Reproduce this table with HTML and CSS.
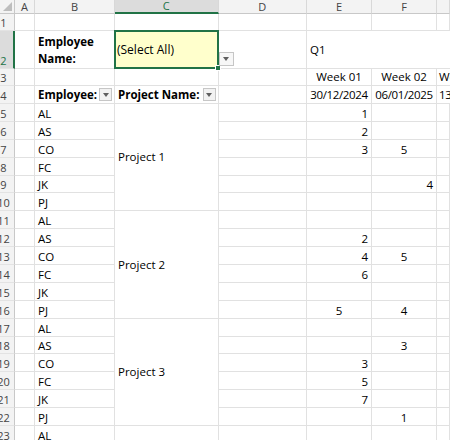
FILE: index.html
```html
<!DOCTYPE html>
<html>
<head>
<meta charset="utf-8">
<link rel="stylesheet" href="styles.css">
</head>
<body>
<div class="sheet">
  <div class="corner"><span class="tri"></span></div>
  <div class="ch">A</div><div class="ch">B</div><div class="ch sel">C</div><div class="ch">D</div><div class="ch">E</div><div class="ch">F</div><div class="ch"></div>

  <div class="rh"><span>1</span></div><div class="c"></div><div class="c"></div><div class="c"></div><div class="c"></div><div class="c"></div><div class="c"></div><div class="c"></div>

  <div class="rh sel"><span>2</span></div><div class="c"></div><div class="c b wrap">Employee Name:</div>
  <div class="c mid active">(Select All)<span class="selbox"></span><span class="handle"></span><span class="dd"><span class="arrow"></span></span></div>
  <div class="c"></div><div class="c mid span3">Q1</div>

  <div class="rh"><span>3</span></div><div class="c"></div><div class="c"></div><div class="c"></div><div class="c"></div><div class="c mid ctr">Week 01</div><div class="c mid ctr">Week 02</div><div class="c mid edge">Week 03</div>

  <div class="rh"><span>4</span></div><div class="c"></div>
  <div class="c mid b split">Employee:<span class="fb"><span class="arrow"></span></span></div>
  <div class="c mid b split">Project Name:<span class="fb"><span class="arrow"></span></span></div>
  <div class="c"></div><div class="c mid ctr date">30/12/2024</div><div class="c mid ctr date">06/01/2025</div><div class="c mid date edge">13/01/2025</div>

  <div class="rh"><span>5</span></div><div class="c"></div><div class="c">AL</div><div class="c mid proj">Project 1</div><div class="c"></div><div class="c num">1</div><div class="c"></div><div class="c"></div>
  <div class="rh"><span>6</span></div><div class="c"></div><div class="c">AS</div><div class="c"></div><div class="c num">2</div><div class="c"></div><div class="c"></div>
  <div class="rh"><span>7</span></div><div class="c"></div><div class="c">CO</div><div class="c"></div><div class="c num">3</div><div class="c ctr">5</div><div class="c"></div>
  <div class="rh"><span>8</span></div><div class="c"></div><div class="c">FC</div><div class="c"></div><div class="c"></div><div class="c"></div><div class="c"></div>
  <div class="rh"><span>9</span></div><div class="c"></div><div class="c">JK</div><div class="c"></div><div class="c"></div><div class="c num">4</div><div class="c"></div>
  <div class="rh"><span>10</span></div><div class="c"></div><div class="c">PJ</div><div class="c"></div><div class="c"></div><div class="c"></div><div class="c"></div>

  <div class="rh"><span>11</span></div><div class="c"></div><div class="c">AL</div><div class="c mid proj">Project 2</div><div class="c"></div><div class="c"></div><div class="c"></div><div class="c"></div>
  <div class="rh"><span>12</span></div><div class="c"></div><div class="c">AS</div><div class="c"></div><div class="c num">2</div><div class="c"></div><div class="c"></div>
  <div class="rh"><span>13</span></div><div class="c"></div><div class="c">CO</div><div class="c"></div><div class="c num">4</div><div class="c ctr">5</div><div class="c"></div>
  <div class="rh"><span>14</span></div><div class="c"></div><div class="c">FC</div><div class="c"></div><div class="c num">6</div><div class="c"></div><div class="c"></div>
  <div class="rh"><span>15</span></div><div class="c"></div><div class="c">JK</div><div class="c"></div><div class="c"></div><div class="c"></div><div class="c"></div>
  <div class="rh"><span>16</span></div><div class="c"></div><div class="c">PJ</div><div class="c"></div><div class="c ctr">5</div><div class="c ctr">4</div><div class="c"></div>

  <div class="rh"><span>17</span></div><div class="c"></div><div class="c">AL</div><div class="c mid proj">Project 3</div><div class="c"></div><div class="c"></div><div class="c"></div><div class="c"></div>
  <div class="rh"><span>18</span></div><div class="c"></div><div class="c">AS</div><div class="c"></div><div class="c"></div><div class="c ctr">3</div><div class="c"></div>
  <div class="rh"><span>19</span></div><div class="c"></div><div class="c">CO</div><div class="c"></div><div class="c num">3</div><div class="c"></div><div class="c"></div>
  <div class="rh"><span>20</span></div><div class="c"></div><div class="c">FC</div><div class="c"></div><div class="c num">5</div><div class="c"></div><div class="c"></div>
  <div class="rh"><span>21</span></div><div class="c"></div><div class="c">JK</div><div class="c"></div><div class="c num">7</div><div class="c"></div><div class="c"></div>
  <div class="rh"><span>22</span></div><div class="c"></div><div class="c">PJ</div><div class="c"></div><div class="c"></div><div class="c ctr">1</div><div class="c"></div>

  <div class="rh"><span>23</span></div><div class="c"></div><div class="c">AL</div><div class="c"></div><div class="c"></div><div class="c"></div><div class="c"></div><div class="c"></div>
</div>
</body>
</html>
```
FILE: styles.css
```css
html, body {
  margin: 0;
  padding: 0;
  background: #ffffff;
  overflow: hidden;
}

.sheet {
  display: grid;
  grid-template-columns: 15px 20px 80px 103.5px 88.5px 65px 65px 13px;
  grid-template-rows: 14px 17px 38px 17px 18px repeat(19, 17.9px);
  font-family: "Open Sans", "Noto Sans", sans-serif;
  font-size: 11.5px;
  color: #000;
  width: 450px;
}

.corner {
  background: #f3f3f3;
  border-right: 1px solid #c8c8c8;
  border-bottom: 1px solid #c8c8c8;
  display: flex;
  align-items: flex-end;
  justify-content: flex-end;
  padding: 0 2px 2px 0;
}

.tri {
  width: 0;
  height: 0;
  border-left: 9px solid transparent;
  border-bottom: 9px solid #bdbdbd;
}

.ch {
  background: #f3f3f3;
  border-right: 1px solid #d8d8d8;
  border-bottom: 1px solid #c8c8c8;
  color: #444;
  font-size: 11px;
  line-height: 12px;
  display: flex;
  align-items: center;
  justify-content: center;
}

.ch.sel {
  background: #dcdcdc;
  color: #217346;
  border-bottom: 2px solid #217346;
}

.rh {
  background: #f3f3f3;
  border-right: 1px solid #c8c8c8;
  border-bottom: 1px solid #e3e3e3;
  color: #444;
  font-size: 11px;
  line-height: 14px;
  display: flex;
  align-items: flex-end;
  overflow: hidden;
}

.rh span {
  flex: 0 0 23px;
  margin-left: -8px;
  text-align: center;
}

.rh.sel {
  background: #dcdcdc;
  color: #217346;
  border-right: 2px solid #217346;
}

.c {
  border-right: 1px solid #e1e1e1;
  border-bottom: 1px solid #e1e1e1;
  display: flex;
  align-items: flex-end;
  padding: 0 3px 0 3px;
  line-height: 14px;
  white-space: nowrap;
  overflow: hidden;
  min-width: 0;
}

.mid { align-items: center; }
.ctr { justify-content: center; }
.num { justify-content: flex-end; }
.b { font-weight: 700; }

.date {
  letter-spacing: -0.35px;
  padding: 0 1px;
}

.edge {
  padding-left: 2px;
  padding-right: 0;
  border-right: none;
}

.wrap {
  white-space: normal;
  line-height: 16.5px;
  padding-bottom: 1px;
}

.span3 { grid-column: span 3; border-right: none; }

.proj { grid-row: span 6; }

.split {
  justify-content: space-between;
  padding-right: 2px;
}

.active {
  background: #ffffcc;
  position: relative;
  overflow: visible;
  padding-left: 2px;
  font-size: 12px;
}

.selbox {
  position: absolute;
  top: -1px;
  left: -1px;
  right: -1px;
  bottom: -1px;
  border: 2px solid #217346;
  pointer-events: none;
}

.handle {
  position: absolute;
  right: -3px;
  bottom: -3px;
  width: 4px;
  height: 4px;
  background: #217346;
  border: 1px solid #ffffff;
  z-index: 2;
}

.dd {
  position: absolute;
  left: calc(100% + 1px);
  top: 21px;
  width: 15px;
  height: 14px;
  box-sizing: border-box;
  border: 1px solid #c6c6c6;
  background: #f7f7f7;
  display: flex;
  align-items: center;
  justify-content: center;
  z-index: 3;
}

.fb {
  flex: 0 0 auto;
  width: 13px;
  height: 13px;
  box-sizing: border-box;
  border: 1px solid #c6c6c6;
  background: #f2f2f2;
  display: flex;
  align-items: center;
  justify-content: center;
}

.arrow {
  width: 0;
  height: 0;
  border-left: 3.5px solid transparent;
  border-right: 3.5px solid transparent;
  border-top: 4px solid #5f5f5f;
}
```
